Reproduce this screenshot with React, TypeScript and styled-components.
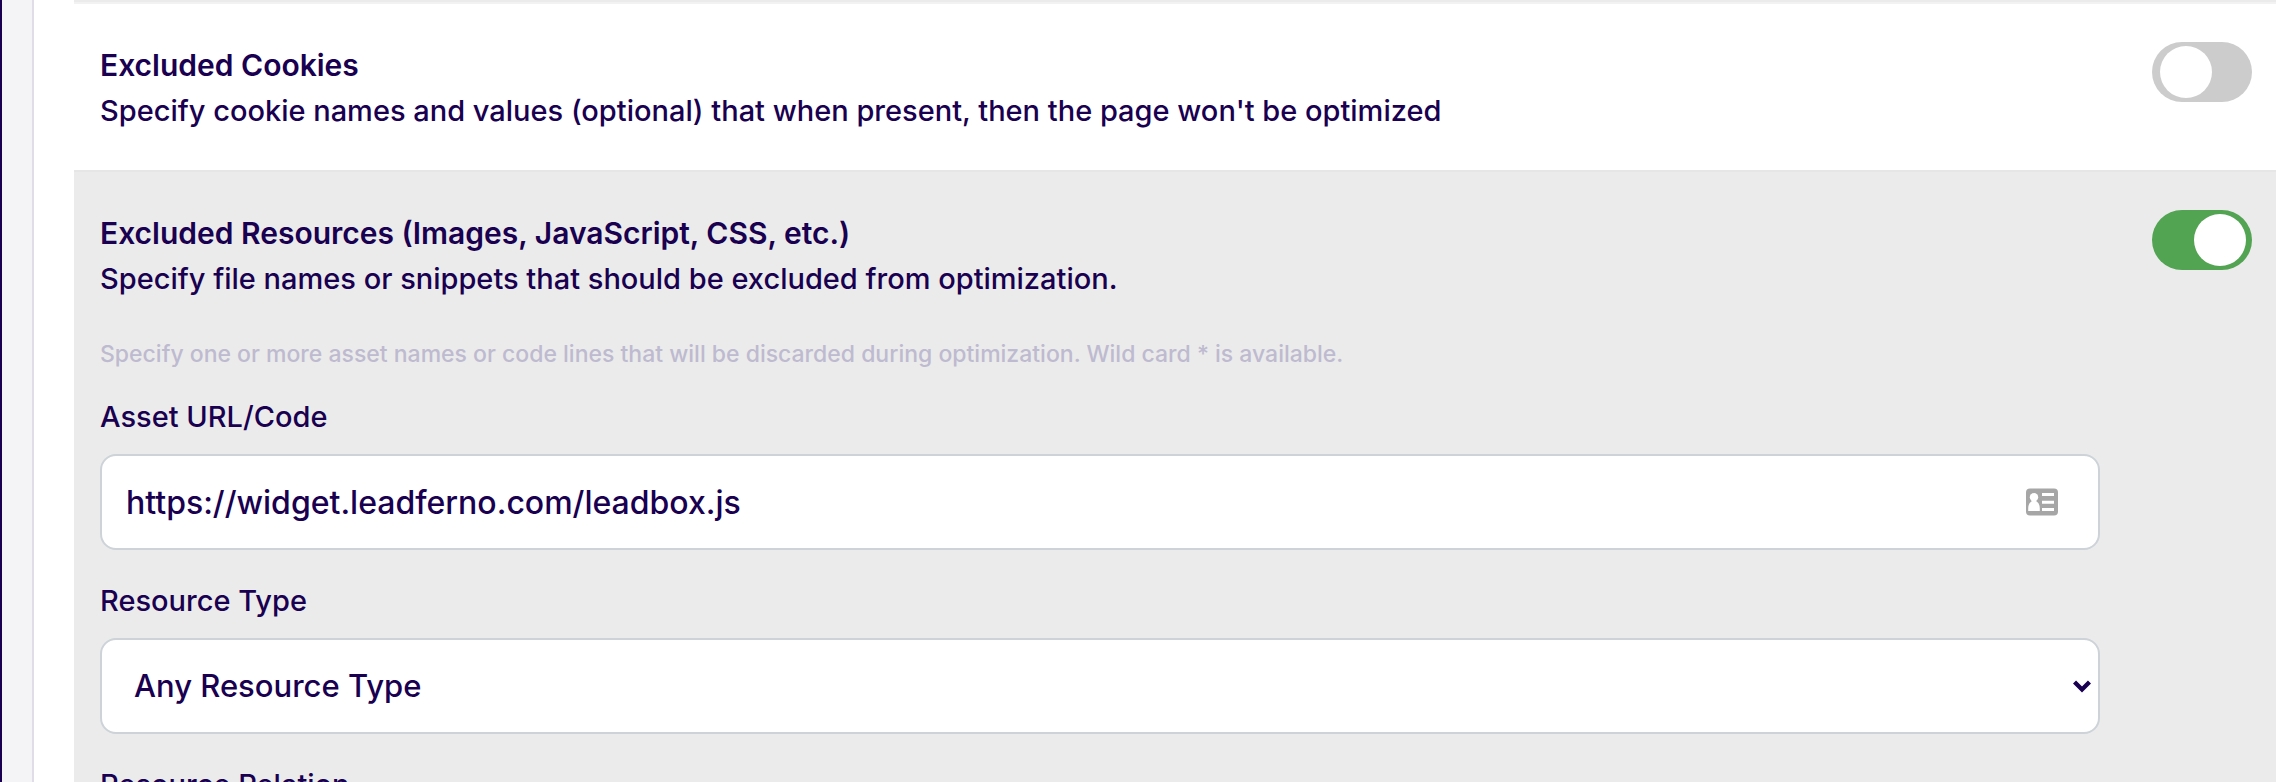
import React, { useState } from 'react';
import styled, { createGlobalStyle } from 'styled-components';

const ink = '#190050';
const panel = '#ebebeb';

const GlobalStyle = createGlobalStyle`
  *, *::before, *::after { box-sizing: border-box; }
  body {
    margin: 0;
    background: #fff;
    color: ${ink};
    font-family: Inter, "Open Sans", sans-serif;
    font-weight: 500;
  }
`;

const Shell = styled.div`
  display: flex;
  height: 100vh;
  overflow: hidden;
`;

const SideRail = styled.aside`
  flex: 0 0 34px;
  background: #f4f3f6;
  border-left: 2px solid ${ink};
  border-right: 2px solid #e0dde8;
`;

const Content = styled.main`
  flex: 1;
  min-width: 0;
  margin-left: 40px;
`;

const PreviousRow = styled.div`
  height: 2px;
  background: ${panel};
`;

const Row = styled.section<{ $active?: boolean }>`
  display: grid;
  grid-template-columns: minmax(0, 1fr) 100px;
  column-gap: 52px;
  align-items: start;
  padding: 38px 24px 36px 26px;
  border-top: 2px solid ${(p) => (p.$active ? '#e6e6e6' : '#f2f2f2')};
  background: ${(p) => (p.$active ? panel : '#fff')};
`;

const Title = styled.h2`
  margin: 0;
  font-size: 30px;
  font-weight: 600;
  line-height: 46px;
`;

const Description = styled.p`
  margin: 0;
  font-size: 29px;
  line-height: 46px;
`;

const Hint = styled.p`
  margin: 35px 0 23px;
  font-size: 23px;
  line-height: 34px;
  color: #bebad0;
`;

const Field = styled.div`
  display: flex;
  flex-direction: column;
  gap: 14px;

  & + & { margin-top: 28px; }
`;

const Label = styled.label`
  font-size: 29px;
  line-height: 46px;
`;

const Control = styled.div`
  position: relative;

  input, select {
    display: block;
    width: 100%;
    height: 96px;
    margin: 0;
    border: 2px solid #cdd3d8;
    border-radius: 16px;
    background: #fff;
    color: ${ink};
    font-family: inherit;
    font-weight: 500;
    appearance: none;
  }
`;

const TextInput = styled.input`
  padding: 0 96px 0 24px;
  font-size: 32px;
`;

const Select = styled.select`
  padding: 0 48px 2px 32px;
  font-size: 31px;
`;

const CardIcon = styled.svg`
  position: absolute;
  top: 34px;
  right: 42px;
`;

const Chevron = styled.svg`
  position: absolute;
  top: 42px;
  right: 9px;
  pointer-events: none;
`;

const Switch = styled.input`
  appearance: none;
  display: flex;
  align-items: center;
  width: 100px;
  height: 60px;
  margin: 0;
  padding: 0 6px 0 8px;
  border-radius: 30px;
  background: #ccc;
  cursor: pointer;

  &::before {
    content: '';
    width: 52px;
    height: 52px;
    border-radius: 50%;
    background: #fff;
  }

  &:checked {
    justify-content: flex-end;
    background: #52a352;
  }
`;

function SelectField({ id, label, options }: { id: string; label: string; options: string[] }) {
  return (
    <Field>
      <Label htmlFor={id}>{label}</Label>
      <Control>
        <Select id={id}>
          {options.map((option) => (
            <option key={option}>{option}</option>
          ))}
        </Select>
        <Chevron width="18" height="13" viewBox="0 0 18 13" aria-hidden="true">
          <path d="M1.5 2 9 9.500 16.500 2" fill="none" stroke={ink} strokeWidth="4.4" />
        </Chevron>
      </Control>
    </Field>
  );
}

export default function App() {
  const [cookies, setCookies] = useState(false);
  const [resources, setResources] = useState(true);
  const [url, setUrl] = useState('https://widget.leadferno.com/leadbox.js');

  return (
    <>
      <GlobalStyle />
      <Shell>
        <SideRail />
        <Content>
          <PreviousRow />
          <Row>
            <div>
              <Title id="cookies-title">Excluded Cookies</Title>
              <Description>
                Specify cookie names and values (optional) that when present, then the page won't be optimized
              </Description>
            </div>
            <Switch
              type="checkbox"
              role="switch"
              aria-labelledby="cookies-title"
              checked={cookies}
              onChange={(e) => setCookies(e.target.checked)}
            />
          </Row>
          <Row $active>
            <div>
              <Title id="resources-title">Excluded Resources (Images, JavaScript, CSS, etc.)</Title>
              <Description>Specify file names or snippets that should be excluded from optimization.</Description>
              <Hint>
                Specify one or more asset names or code lines that will be discarded during optimization. Wild card * is
                available.
              </Hint>
              <Field>
                <Label htmlFor="asset-url">Asset URL/Code</Label>
                <Control>
                  <TextInput id="asset-url" type="text" value={url} onChange={(e) => setUrl(e.target.value)} />
                  <CardIcon width="32" height="28" viewBox="0 0 32 28" aria-hidden="true">
                    <rect y="0.5" width="32" height="27" rx="4" fill="#a6a6a6" />
                    <circle cx="8" cy="9.3" r="4.2" fill="#fff" />
                    <path d="M2.2 23v-2.500c0-3.700 1.700-6.800 4.300-7.500h3c2.600.7 4.300 3.800 4.300 7.500V23z" fill="#fff" />
                    <path d="M16 5h12v3H16zM16 12.700h12v3H16zM16 20h12v3H16z" fill="#fff" />
                  </CardIcon>
                </Control>
              </Field>
              <SelectField id="resource-type" label="Resource Type" options={['Any Resource Type']} />
              <SelectField id="resource-relation" label="Resource Relation" options={[]} />
            </div>
            <Switch
              type="checkbox"
              role="switch"
              aria-labelledby="resources-title"
              checked={resources}
              onChange={(e) => setResources(e.target.checked)}
            />
          </Row>
        </Content>
      </Shell>
    </>
  );
}
